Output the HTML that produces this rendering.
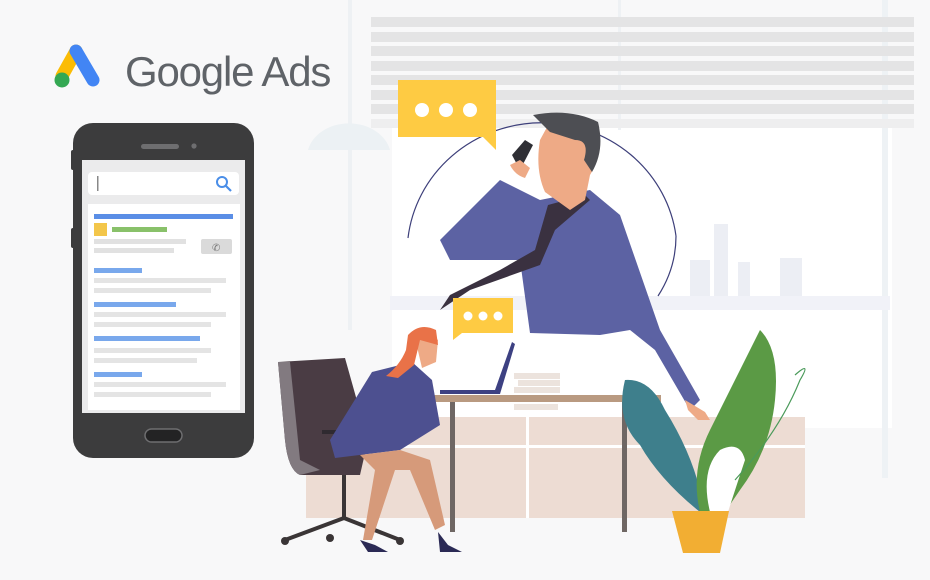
<!DOCTYPE html>
<html><head><meta charset="utf-8"><style>
html,body{margin:0;padding:0;background:#f8f8f9;}
svg{display:block}
</style></head><body>
<svg width="930" height="580" viewBox="0 0 930 580" xmlns="http://www.w3.org/2000/svg">
<rect width="930" height="580" fill="#f8f8f9"/>
<!-- window -->
<rect x="392" y="128" width="500" height="300" fill="#ffffff"/>
<rect x="348" y="0" width="4" height="330" fill="#eef1f4"/>
<rect x="618" y="0" width="3" height="130" fill="#eef1f4"/>
<rect x="882" y="0" width="6" height="478" fill="#eef2f5"/>
<!-- blinds -->
<g fill="#e4e4e5">
<rect x="371" y="17" width="543" height="10"/>
<rect x="371" y="32" width="543" height="10"/>
<rect x="371" y="46" width="543" height="10"/>
<rect x="371" y="61" width="543" height="10"/>
<rect x="371" y="75" width="543" height="10"/>
<rect x="371" y="90" width="543" height="10"/>
<rect x="371" y="104" width="543" height="10"/>
<rect x="371" y="119" width="543" height="9" fill="#eeeeef"/>
</g>
<!-- lamp -->
<path d="M308 150 A42 34 0 0 1 390 150 Z" fill="#ecf1f4"/>
<!-- city -->
<g fill="#eceef4">
<rect x="714" y="224" width="14" height="80"/><rect x="738" y="262" width="12" height="40"/>
<rect x="780" y="258" width="22" height="44"/><rect x="690" y="260" width="20" height="44"/>
</g>
<rect x="390" y="296" width="500" height="14" fill="#f1f2f8"/>
<!-- cabinet -->
<rect x="306" y="417" width="499" height="101" fill="#eddcd3"/>
<rect x="306" y="445" width="499" height="3" fill="#fff"/>
<rect x="526" y="417" width="3" height="101" fill="#fff"/>
<!-- circle arc -->
<path d="M408 238 A135 130 0 0 1 676 236 M676 236 A135 120 0 0 1 658 296" fill="none" stroke="#3d3f7a" stroke-width="1.2"/>
<!-- man -->
<path d="M440 240 L500 180 L540 200 L590 190 L620 215 L660 330 L700 400 L690 410 L655 350 L630 330 L600 335 L530 333 L520 260 L450 260 Z" fill="#5c62a3"/>
<path d="M548 205 L585 195 L590 200 L555 230 L540 265 L470 290 L440 310 L450 295 L500 270 L535 250 Z" fill="#3a3140"/>
<path d="M552 118 Q575 110 598 125 Q600 160 590 175 L585 200 L570 210 L545 192 Q535 170 540 140 Z" fill="#eeaa86"/>
<path d="M533 115 Q570 108 598 122 Q605 150 592 172 L584 160 Q590 140 575 140 L550 132 Z" fill="#4d4e53"/>
<path d="M512 155 L525 140 L533 145 L520 170 Z" fill="#2f2f35"/>
<path d="M510 165 Q515 175 525 178 L530 168 L520 160 Z" fill="#eeaa86"/>
<path d="M685 400 L705 412 L710 420 L698 420 L688 410 Z" fill="#eeaa86"/>
<!-- bubbles -->
<path d="M398 80 H496 V150 L483 137 H398 Z" fill="#fecb43"/>
<circle cx="422" cy="110" r="7" fill="#fff"/><circle cx="446" cy="110" r="7" fill="#fff"/><circle cx="470" cy="110" r="7" fill="#fff"/>
<path d="M453 298 H513 V333 H462 L453 340 Z" fill="#fecb43"/>
<circle cx="468" cy="316" r="4.5" fill="#fff"/><circle cx="483" cy="316" r="4.5" fill="#fff"/><circle cx="498" cy="316" r="4.5" fill="#fff"/>
<!-- laptop -->
<path d="M512 342 L515 344 L500 394 L440 394 L440 390 L495 390 Z" fill="#3d4182"/>
<!-- books -->
<g fill="#ece3dd"><rect x="514" y="373" width="46" height="6"/><rect x="518" y="380" width="42" height="6"/><rect x="514" y="387" width="46" height="6"/><rect x="514" y="404" width="44" height="6"/></g>
<!-- desk -->
<rect x="425" y="395" width="236" height="7" fill="#b99a81"/>
<rect x="450" y="402" width="5" height="130" fill="#6f6764"/>
<rect x="622" y="402" width="5" height="130" fill="#6f6764"/>
<!-- chair -->
<path d="M278 362 L345 358 L368 440 L360 475 L300 475 Q288 470 285 440 Z" fill="#4a3c44"/>
<path d="M278 362 L290 362 L300 460 L320 470 L300 475 Q288 470 285 440 Z" fill="#827a80"/>
<rect x="322" y="430" width="40" height="4" fill="#2f2a30"/>
<rect x="342" y="475" width="4" height="45" fill="#3a3536"/>
<path d="M285 540 L344 518 L400 540" stroke="#3a3536" stroke-width="4" fill="none"/>
<circle cx="285" cy="541" r="4" fill="#3a3536"/><circle cx="400" cy="541" r="4" fill="#3a3536"/><circle cx="330" cy="538" r="4" fill="#3a3536"/>
<!-- woman -->
<path d="M372 372 L412 362 L432 380 L440 425 L400 450 L335 458 L330 440 Z" fill="#4d5090"/>
<path d="M415 338 Q428 330 438 340 L436 362 L422 368 Z" fill="#eeaa86"/>
<path d="M408 335 Q420 322 436 330 L438 345 L420 340 L414 365 L398 378 L386 376 Q400 365 406 350 Z" fill="#e97248"/>
<path d="M360 455 L400 450 L430 460 L445 525 L435 530 L410 470 L395 470 L372 540 L363 540 L375 470 Z" fill="#d69a7a"/>
<path d="M360 540 L375 545 L388 552 L368 552 Z M438 532 L448 545 L462 552 L440 552 Z" fill="#2b2a55"/>
<!-- plant -->
<path d="M625 380 Q650 378 665 410 Q690 450 700 490 L700 512 Q660 480 640 445 Q615 420 625 380 Z" fill="#3e7f8c"/>
<path d="M700 512 Q690 470 710 430 Q730 390 760 330 Q780 350 775 400 Q770 450 740 490 L725 512 Z" fill="#5b9a45"/>
<path d="M710 512 Q700 470 720 450 Q740 440 745 460 Q735 490 728 512 Z" fill="#ffffff"/>
<path d="M735 480 Q780 430 800 380 Q812 360 795 375" fill="none" stroke="#4a9a5a" stroke-width="1.2"/>
<path d="M672 511 H729 L720 553 H683 Z" fill="#f2ae33"/>
<!-- logo -->
<path d="M76 51 L62 76" stroke="#fbbc04" stroke-width="13" stroke-linecap="round"/>
<path d="M76 51 L93 80" stroke="#4285f4" stroke-width="13" stroke-linecap="round"/>
<circle cx="62" cy="80" r="7.5" fill="#34a853"/>
<text x="125" y="86" font-family="Liberation Sans, sans-serif" font-size="42" fill="#5f6368" letter-spacing="-1.2">Google Ads</text>
<!-- phone -->
<rect x="71" y="150" width="6" height="20" rx="2" fill="#3b3b3c"/>
<rect x="71" y="228" width="6" height="20" rx="2" fill="#3b3b3c"/>
<rect x="73" y="123" width="181" height="335" rx="20" fill="#3c3c3d"/>
<rect x="141" y="144" width="38" height="5" rx="2.5" fill="#6e6e70"/>
<circle cx="194" cy="146" r="2.6" fill="#6e6e70"/>
<rect x="82" y="160" width="163" height="253" fill="#ebebec"/>
<rect x="88" y="172" width="151" height="23" rx="4" fill="#fff"/>
<rect x="97" y="176" width="1.5" height="15" fill="#888"/>
<circle cx="222" cy="182" r="5" fill="none" stroke="#4a8ee8" stroke-width="2"/>
<path d="M226 186 L231 191" stroke="#4a8ee8" stroke-width="2.2"/>
<rect x="88" y="204" width="152" height="206" fill="#fff"/>
<rect x="94" y="214" width="139" height="5" fill="#5a8ee6"/>
<rect x="94" y="223" width="13" height="13" fill="#f3c64a"/>
<rect x="112" y="227" width="55" height="5" fill="#89c16a"/>
<rect x="94" y="239" width="92" height="5" fill="#e1e1e1"/>
<rect x="94" y="248" width="80" height="5" fill="#e1e1e1"/>
<rect x="201" y="239" width="31" height="15" rx="2" fill="#dadada"/>
<text x="212" y="251" font-size="10" fill="#777" font-family="DejaVu Sans, sans-serif">✆</text>
<g fill="#79a8ec"><rect x="94" y="268" width="48" height="5"/><rect x="94" y="302" width="82" height="5"/><rect x="94" y="336" width="106" height="5"/><rect x="94" y="372" width="48" height="5"/></g>
<g fill="#e4e4e4"><rect x="94" y="278" width="132" height="5"/><rect x="94" y="288" width="117" height="5"/><rect x="94" y="312" width="132" height="5"/><rect x="94" y="322" width="117" height="5"/><rect x="94" y="348" width="117" height="5"/><rect x="94" y="358" width="103" height="5"/><rect x="94" y="382" width="132" height="5"/><rect x="94" y="392" width="117" height="5"/></g>
<rect x="145" y="429" width="37" height="13" rx="6.5" fill="#232324" stroke="#6e6e70" stroke-width="1.5"/>
</svg>
</body></html>
